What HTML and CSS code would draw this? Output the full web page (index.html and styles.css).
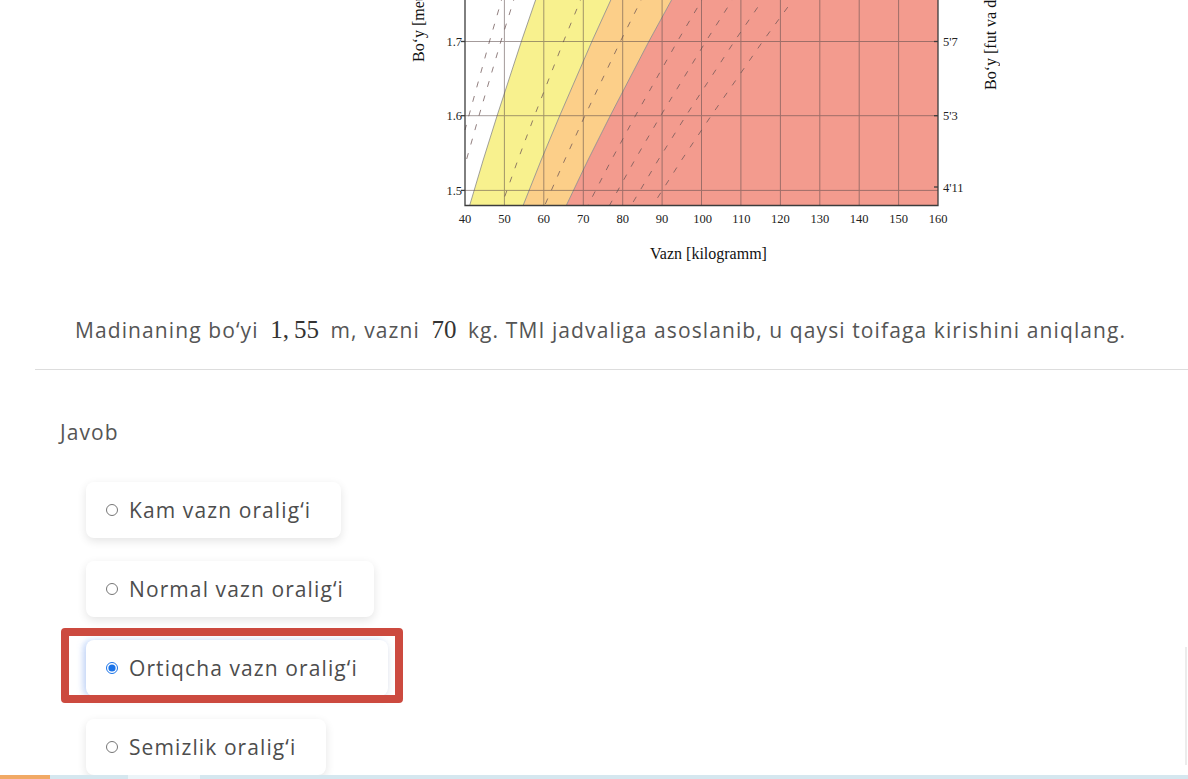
FILE: index.html
```html
<!DOCTYPE html>
<html lang="uz">
<head>
<meta charset="utf-8">
<title>TMI jadvali</title>
<link rel="stylesheet" href="styles.css">
</head>
<body>
<div class="page">
  <div class="figure">
    <svg class="chart" width="600" height="270" viewBox="400 0 600 270" xmlns="http://www.w3.org/2000/svg">
      <rect x="465" y="-10" width="473" height="215" fill="#ffffff"/>
      <polygon fill="#f8f18e" points="537.3,-5 613.1,-5 592.1,41 559.6,116 541.2,160 523.3,205 469.8,205 483.2,160 497,116 521.5,41"/>
      <polygon fill="#fccf89" points="613.1,-5 674.3,-5 649.1,41 610.1,116 588,160 566.5,205 523.3,205 541.2,160 559.6,116 592.1,41"/>
      <polygon fill="#f39b8e" points="674.3,-5 938,-5 938,205 566.5,205 588,160 610.1,116 649.1,41"/>
      <g fill="none" stroke="#8a8a8a" stroke-width="1" opacity="0.8">
        <polyline points="537.3,-5 521.5,41 497,116 483.2,160 469.8,205"/>
        <polyline points="613.1,-5 592.1,41 559.6,116 541.2,160 523.3,205"/>
        <polyline points="674.3,-5 649.1,41 610.1,116 588,160 566.5,205"/>
      </g>
      <g fill="none" stroke="#6e5656" stroke-width="1" stroke-dasharray="6 9" opacity="0.75">
        <polyline points="503,-5 489.6,41 468.8,116 465,130"/>
        <polyline points="515.3,-5 501,41 478.9,116 466.4,160 465,165"/>
        <polyline points="582.6,-5 563.7,41 534.4,116 517.9,160 501.7,205"/>
        <polyline points="643.7,-5 620.6,41 584.8,116 564.7,160 544.9,205"/>
        <polyline points="704.9,-5 677.6,41 635.3,116 611.4,160 588.1,205"/>
        <polyline points="735.5,-5 706.1,41 660.5,116 634.8,160 609.7,205"/>
        <polyline points="766.1,-5 734.6,41 685.8,116 658.2,160 631.4,205"/>
        <polyline points="796.6,-5 763,41 711,116 681.6,160 653,205"/>
      </g>
      <g stroke="#5a4a4a" stroke-width="1" opacity="0.55">
        <line x1="504.4" y1="-5" x2="504.4" y2="205"/>
        <line x1="543.8" y1="-5" x2="543.8" y2="205"/>
        <line x1="583.3" y1="-5" x2="583.3" y2="205"/>
        <line x1="622.7" y1="-5" x2="622.7" y2="205"/>
        <line x1="662.1" y1="-5" x2="662.1" y2="205"/>
        <line x1="701.5" y1="-5" x2="701.5" y2="205"/>
        <line x1="740.9" y1="-5" x2="740.9" y2="205"/>
        <line x1="780.4" y1="-5" x2="780.4" y2="205"/>
        <line x1="819.8" y1="-5" x2="819.8" y2="205"/>
        <line x1="859.2" y1="-5" x2="859.2" y2="205"/>
        <line x1="898.6" y1="-5" x2="898.6" y2="205"/>
        <line x1="465" y1="41.5" x2="938" y2="41.5"/>
        <line x1="465" y1="115.7" x2="938" y2="115.7"/>
        <line x1="465" y1="190.4" x2="938" y2="190.4"/>
      </g>
      <g stroke="#3c3c3c" stroke-width="1.3" fill="none">
        <polyline points="465,-5 465,205.5 938,205.5 938,-5"/>
        <line x1="461" y1="41.5" x2="465" y2="41.5"/>
        <line x1="461" y1="115.7" x2="465" y2="115.7"/>
        <line x1="461" y1="190.4" x2="465" y2="190.4"/>
        <line x1="934" y1="41.5" x2="938" y2="41.5"/>
        <line x1="934" y1="115.7" x2="938" y2="115.7"/>
        <line x1="934" y1="187" x2="938" y2="187"/>
      </g>
      <g class="tick-label" text-anchor="end">
        <text x="462" y="45.5">1.7</text>
        <text x="462" y="120">1.6</text>
        <text x="462" y="194.5">1.5</text>
      </g>
      <g class="tick-label" text-anchor="start">
        <text x="943" y="45.5">5'7</text>
        <text x="943" y="120">5'3</text>
        <text x="943" y="191.5">4'11</text>
      </g>
      <g class="tick-label" text-anchor="middle">
        <text x="465" y="223">40</text>
        <text x="504.4" y="223">50</text>
        <text x="543.8" y="223">60</text>
        <text x="583.3" y="223">70</text>
        <text x="622.7" y="223">80</text>
        <text x="662.1" y="223">90</text>
        <text x="702.5" y="223">100</text>
        <text x="741.4" y="223">110</text>
        <text x="780.4" y="223">120</text>
        <text x="819.8" y="223">130</text>
        <text x="859.2" y="223">140</text>
        <text x="898.6" y="223">150</text>
        <text x="938" y="223">160</text>
      </g>
      <text class="axis-title" x="708.5" y="259" text-anchor="middle">Vazn [kilogramm]</text>
      <text class="axis-title" transform="translate(424 62) rotate(-90)">Bo‘y [metr]</text>
      <text class="axis-title" transform="translate(996 90) rotate(-90)">Bo‘y [fut va dyuym]</text>
    </svg>
  </div>

  <p class="question">Madinaning bo‘yi <span class="math">1,&#8201;55</span> m, vazni <span class="math">70</span> kg. TMI jadvaliga asoslanib, u qaysi toifaga kirishini aniqlang.</p>

  <div class="divider"></div>

  <section class="answer">
    <div class="answer-label">Javob</div>
    <div class="options">
      <label class="option"><input type="radio" name="tmi"><span>Kam vazn oralig‘i</span></label>
      <label class="option"><input type="radio" name="tmi"><span>Normal vazn oralig‘i</span></label>
      <label class="option option-selected"><input type="radio" name="tmi" checked><span>Ortiqcha vazn oralig‘i</span></label>
      <label class="option"><input type="radio" name="tmi"><span>Semizlik oralig‘i</span></label>
    </div>
  </section>
  <div class="side-edge"></div>
</div>
<div class="bottom-bar">
  <div class="seg seg-orange"></div>
  <div class="seg seg-blue1"></div>
  <div class="seg seg-light"></div>
  <div class="seg seg-rest"></div>
</div>
</body>
</html>
```

FILE: styles.css
```css
*,
*::before,
*::after {
  box-sizing: border-box;
}

html, body {
  margin: 0;
  padding: 0;
  height: 100%;
  background: #ffffff;
}

body {
  display: flex;
  flex-direction: column;
  height: 779px;
  overflow: hidden;
  font-family: "Open Sans", "Noto Sans", sans-serif;
  color: #555555;
}

.page {
  position: relative;
  flex: 1;
  overflow: hidden;
}

.figure {
  height: 270px;
  padding-left: 400px;
}

.chart {
  display: block;
}

.tick-label {
  font-family: "Liberation Serif", "Times New Roman", serif;
  font-size: 12.5px;
  fill: #222222;
}

.axis-title {
  font-family: "Liberation Serif", "Times New Roman", serif;
  font-size: 16px;
  fill: #111111;
}

.question {
  margin: 45px 0 0 0;
  padding-left: 75px;
  font-size: 21px;
  line-height: 30px;
  height: 30px;
  white-space: nowrap;
  color: #555555;
  letter-spacing: 1.1px;
}

.math {
  font-family: "Liberation Serif", "Times New Roman", serif;
  font-size: 25px;
  letter-spacing: 0;
  color: #333333;
  margin: 0 5px;
}

.divider {
  margin: 24px 0 0 35px;
  border-top: 1px solid #dddddd;
}

.answer {
  padding-left: 60px;
}

.answer-label {
  margin-top: 47px;
  font-size: 21px;
  line-height: 30px;
  letter-spacing: 1.1px;
  color: #555555;
}

.options {
  margin-top: 35px;
  margin-left: 26px;
  display: flex;
  flex-direction: column;
  align-items: flex-start;
  gap: 23px;
}

.option {
  position: relative;
  display: inline-flex;
  align-items: center;
  height: 56px;
  padding: 0 30px 0 20px;
  background: #ffffff;
  border-radius: 8px;
  box-shadow: 0 3px 10px rgba(0, 0, 0, 0.11);
  font-size: 21px;
  letter-spacing: 1.1px;
  color: #4d4d4d;
}

.option input {
  width: 12px;
  height: 12px;
  margin: 0 11px 0 0;
  accent-color: #1a73e8;
}

.option-selected {
  box-shadow: -3px 0 6px rgba(110, 160, 255, 0.35), 0 3px 10px rgba(0, 0, 0, 0.08);
}

.option-selected::after {
  content: "";
  position: absolute;
  left: -25px;
  top: -12px;
  width: 342px;
  height: 75px;
  border: 8px solid #cc4a3f;
  border-radius: 4px;
  pointer-events: none;
}

.side-edge {
  position: absolute;
  right: 1px;
  top: 647px;
  width: 2px;
  height: 118px;
  background: #ececec;
}

.bottom-bar {
  height: 4px;
  display: flex;
  background: #d5e7ef;
}

.seg {
  height: 100%;
}

.seg-orange {
  width: 50px;
  background: #f1a965;
}

.seg-blue1 {
  width: 78px;
  background: #d5e7ef;
}

.seg-light {
  width: 72px;
  background: #ecf4f8;
}

.seg-rest {
  flex: 1;
  background: #d5e7ef;
}
```
